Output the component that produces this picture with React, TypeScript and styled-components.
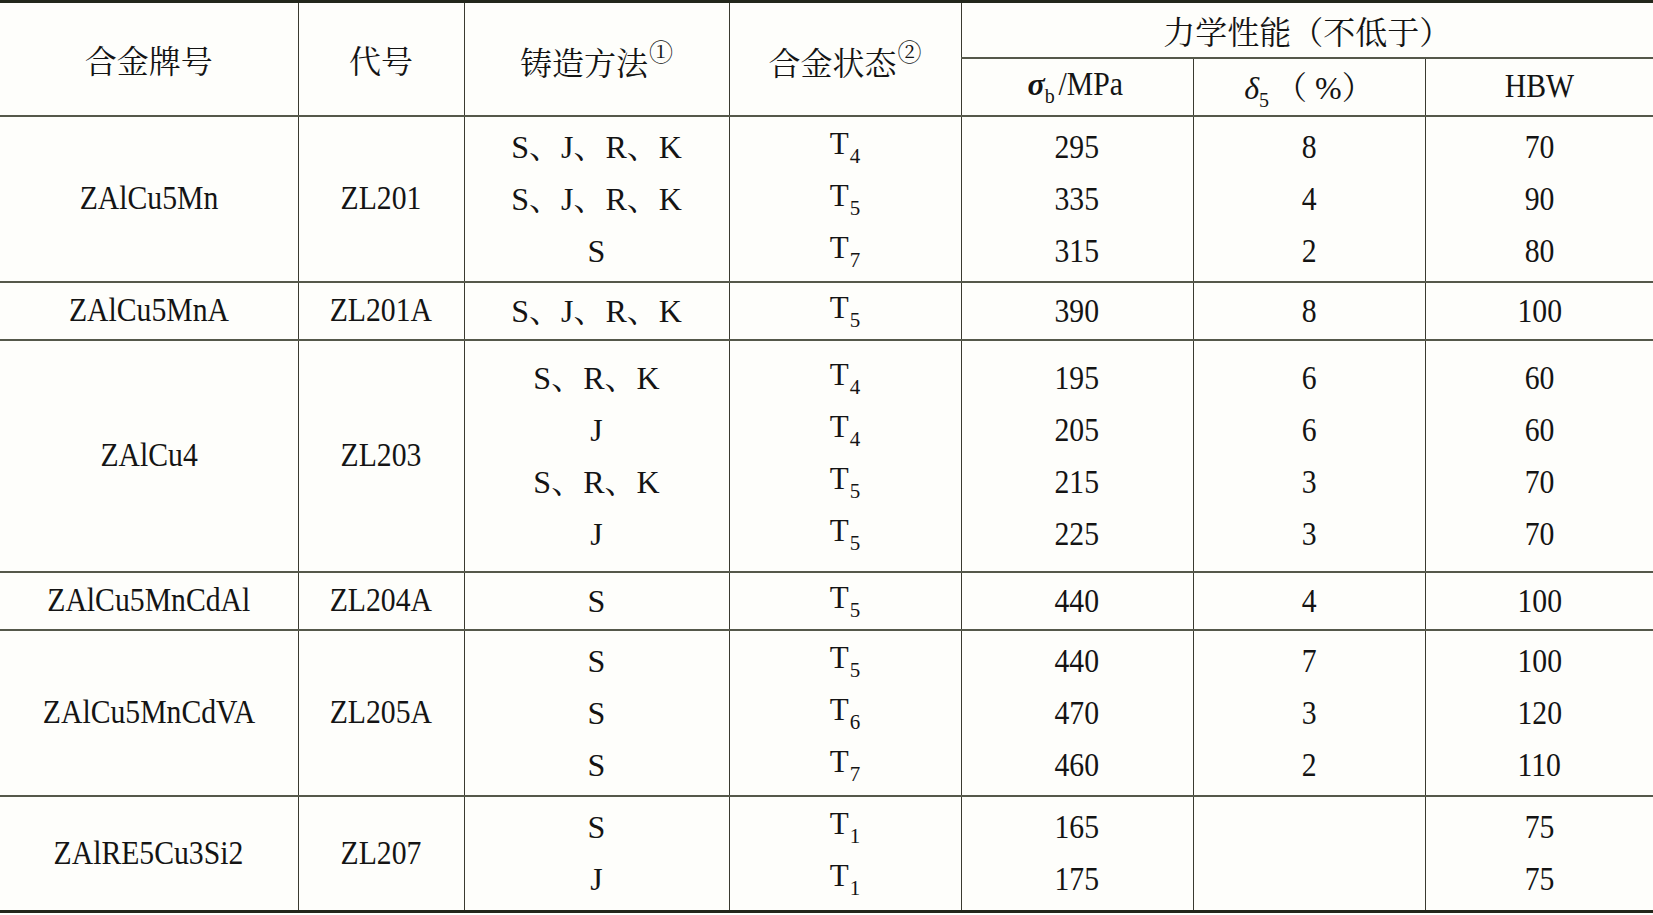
import React from 'react';
import styled, { createGlobalStyle } from 'styled-components';

type Group = {
    name: string;
    code: string;
    methods: string[];
    states: string[];
    strength: string[];
    elong: string[];
    hbw: string[];
    height: number;
};

const groups: Group[] = [
    {
        name: 'ZAlCu5Mn', code: 'ZL201',
        methods: ['S、J、R、K', 'S、J、R、K', 'S'],
        states: ['4', '5', '7'],
        strength: ['295', '335', '315'],
        elong: ['8', '4', '2'],
        hbw: ['70', '90', '80'],
        height: 166,
    },
    {
        name: 'ZAlCu5MnA', code: 'ZL201A',
        methods: ['S、J、R、K'],
        states: ['5'],
        strength: ['390'],
        elong: ['8'],
        hbw: ['100'],
        height: 58,
    },
    {
        name: 'ZAlCu4', code: 'ZL203',
        methods: ['S、R、K', 'J', 'S、R、K', 'J'],
        states: ['4', '4', '5', '5'],
        strength: ['195', '205', '215', '225'],
        elong: ['6', '6', '3', '3'],
        hbw: ['60', '60', '70', '70'],
        height: 232,
    },
    {
        name: 'ZAlCu5MnCdAl', code: 'ZL204A',
        methods: ['S'],
        states: ['5'],
        strength: ['440'],
        elong: ['4'],
        hbw: ['100'],
        height: 58,
    },
    {
        name: 'ZAlCu5MnCdVA', code: 'ZL205A',
        methods: ['S', 'S', 'S'],
        states: ['5', '6', '7'],
        strength: ['440', '470', '460'],
        elong: ['7', '3', '2'],
        hbw: ['100', '120', '110'],
        height: 166,
    },
    {
        name: 'ZAlRE5Cu3Si2', code: 'ZL207',
        methods: ['S', 'J'],
        states: ['1', '1'],
        strength: ['165', '175'],
        elong: ['', ''],
        hbw: ['75', '75'],
        height: 116,
    },
];

const widths = [298, 166, 265, 232, 232, 232, 228];

export default function App() {
    const lines = (items: string[], render?: (s: string) => React.ReactNode) => (
        <Lines>
            {items.map((s, i) => (
                <Line key={i}>{render ? render(s) : <Lat>{s}</Lat>}</Line>
            ))}
        </Lines>
    );

    return (
        <>
            <GlobalStyle />
            <Table>
                <colgroup>
                    {widths.map((w, i) => <col key={i} style={{ width: w }} />)}
                </colgroup>
                <thead>
                    <Row $h={56}>
                        <HeadCell rowSpan={2}>合金牌号</HeadCell>
                        <HeadCell rowSpan={2}>代号</HeadCell>
                        <HeadCell rowSpan={2}>铸造方法<Note>①</Note></HeadCell>
                        <HeadCell rowSpan={2}>合金状态<Note>②</Note></HeadCell>
                        <HeadCell colSpan={3}>力学性能（不低于）</HeadCell>
                    </Row>
                    <Row $h={58}>
                        <HeadCell>
                            <Greek $bold>σ</Greek><Sub>b</Sub><Lat>/MPa</Lat>
                        </HeadCell>
                        <HeadCell>
                            <Greek>δ</Greek><Sub $gap={6}>5</Sub>（ %）
                        </HeadCell>
                        <HeadCell><Lat>HBW</Lat></HeadCell>
                    </Row>
                </thead>
                <tbody>
                    {groups.map((g) => (
                        <Row key={g.code} $h={g.height}>
                            <Cell><Lat>{g.name}</Lat></Cell>
                            <Cell><Lat>{g.code}</Lat></Cell>
                            <Cell>{lines(g.methods, (s) => <Method>{s}</Method>)}</Cell>
                            <Cell>
                                {lines(g.states, (s) => (
                                    <State>T<StateSub>{s}</StateSub></State>
                                ))}
                            </Cell>
                            <Cell>{lines(g.strength)}</Cell>
                            <Cell>{lines(g.elong)}</Cell>
                            <Cell>{lines(g.hbw)}</Cell>
                        </Row>
                    ))}
                </tbody>
            </Table>
        </>
    );
}


/** styling */

const GlobalStyle = createGlobalStyle`
    html, body {
        margin: 0;
        padding: 0;
        background: #fefefb;
    }
    body {
        font-family: "Liberation Serif", "Noto Serif CJK SC", "Noto Sans CJK SC", serif;
        color: #141414;
    }
`;

const Table = styled.table`
    width: 1653px;
    border-collapse: collapse;
    table-layout: fixed;
    border-top: 3px solid #23271b;
    border-bottom: 3px solid #23271b;
`;

const Row = styled.tr<{ $h: number }>`
    height: ${p => p.$h}px;
`;

const BaseCell = styled.td`
    padding: 0;
    text-align: center;
    vertical-align: middle;
    border-bottom: 2px solid #55584a;
    border-left: 1px solid #3a3a30;

    &:first-child {
        border-left: none;
    }
`;

const HeadCell = styled(BaseCell).attrs({ as: 'th' })`
    font-weight: normal;
    font-size: 32px;
    font-family: "Liberation Serif", "Noto Serif CJK SC", "Noto Sans CJK SC", serif;
    white-space: nowrap;

    tr:nth-child(2) > &:first-child {
        border-left: 1px solid #3a3a30;
    }
`;

const Cell = styled(BaseCell)`
    font-size: 33px;
`;

const Lines = styled.div`
    display: flex;
    flex-direction: column;
    align-items: center;
`;

const Line = styled.div`
    height: 52px;
    line-height: 52px;
    white-space: nowrap;
`;

const Lat = styled.span`
    display: inline-block;
    transform: scaleX(0.9);
    font-size: 33px;
`;

const Method = styled.span`
    font-size: 32px;
`;

const State = styled.span`
    display: inline-block;
    font-size: 31px;
    line-height: 52px;
    transform: translateY(-4px);
`;

const StateSub = styled.span`
    font-size: 21px;
    vertical-align: -9px;
    margin-left: 1px;
`;

const Note = styled.sup`
    font-size: 24px;
    vertical-align: 14px;
    margin-left: 1px;
`;

const Greek = styled.i<{ $bold?: boolean }>`
    font-size: 32px;
    font-weight: ${p => (p.$bold ? 'bold' : 'normal')};
    font-family: "Liberation Serif", serif;
`;

const Sub = styled.sub<{ $gap?: number }>`
    font-size: 20px;
    vertical-align: -8px;
    margin-right: ${p => p.$gap ?? 0}px;
`;
